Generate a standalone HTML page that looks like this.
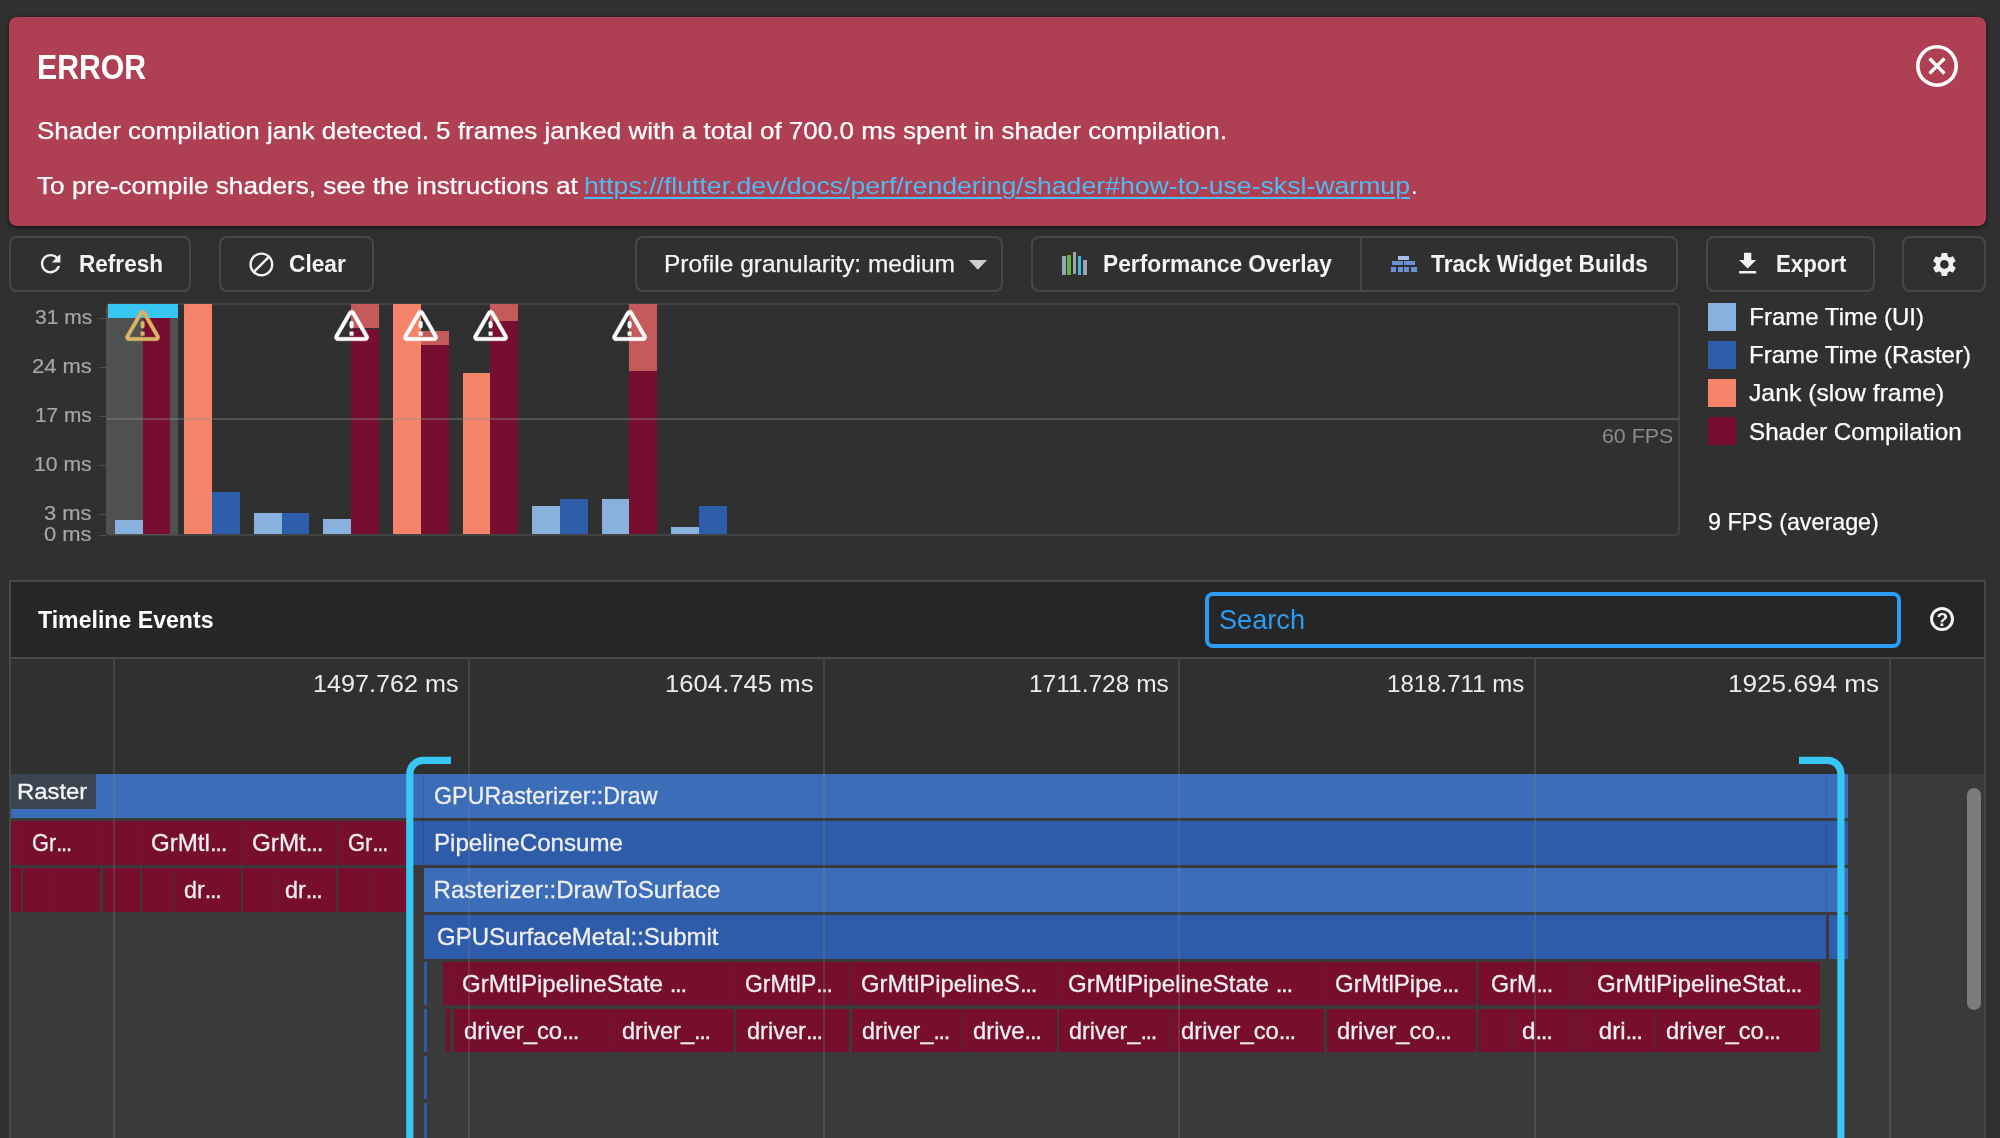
<!DOCTYPE html>
<html><head><meta charset="utf-8"><title>Flutter DevTools - Performance</title>
<style>
html,body{margin:0;padding:0;}
body{width:2000px;height:1138px;overflow:hidden;background:#303030;font-family:"Liberation Sans",sans-serif;position:relative;}
#root{position:absolute;left:0;top:0;width:2000px;height:1138px;overflow:hidden;will-change:transform;}
#root div{box-sizing:border-box;}
svg{position:absolute;overflow:visible;}
</style></head><body><div id="root">
<div style="position:absolute;left:9px;top:17.4px;width:1977px;height:208.6px;background:#af4054;border-radius:8px;box-shadow:0 1.5px 4px rgba(0,0,0,.55)"></div>
<div style="position:absolute;left:37.00px;top:49.54px;font-size:34.8px;line-height:34.8px;color:#ffffff;font-weight:700;white-space:pre;transform-origin:0 0;transform:scaleX(0.8673);">ERROR</div>
<div style="position:absolute;left:36.50px;top:118.76px;font-size:24.5px;line-height:24.5px;color:#ffffff;font-weight:400;white-space:pre;transform-origin:0 0;transform:scaleX(1.0617);-webkit-text-stroke:0.25px #ffffff;">Shader compilation jank detected. 5 frames janked with a total of 700.0 ms spent in shader compilation.</div>
<div style="position:absolute;left:36.50px;top:174.26px;font-size:24.5px;line-height:24.5px;color:#ffffff;font-weight:400;white-space:pre;transform-origin:0 0;transform:scaleX(1.0674);-webkit-text-stroke:0.25px #ffffff;">To pre-compile shaders, see the instructions at </div>
<div style="position:absolute;left:584.00px;top:174.26px;font-size:24.5px;line-height:24.5px;color:#4cbcf3;font-weight:400;white-space:pre;transform-origin:0 0;transform:scaleX(1.0870);text-decoration:underline;text-underline-offset:3px;text-decoration-thickness:1.5px;">https://flutter.dev/docs/perf/rendering/shader#how-to-use-sksl-warmup</div>
<div style="position:absolute;left:1411.00px;top:174.26px;font-size:24.5px;line-height:24.5px;color:#ffffff;font-weight:400;white-space:pre;transform-origin:0 0;">.</div>
<svg style="left:1913.4px;top:42.4px" width="48" height="48" viewBox="0 0 48 48"><circle cx="24" cy="24" r="19.2" fill="none" stroke="#fff" stroke-width="3.6"/><path d="M16.5 16.5L31.5 31.5M31.5 16.5L16.5 31.5" stroke="#fff" stroke-width="3.2" fill="none"/></svg>
<div style="position:absolute;left:8.5px;top:235.7px;width:182.8px;height:56px;border:2px solid #484848;border-radius:8px;"></div>
<svg style="left:36.06px;top:249.46px" width="29.28" height="29.28" viewBox="0 0 24 24"><path d="M17.65 6.35C16.2 4.9 14.21 4 12 4c-4.42 0-7.99 3.58-7.99 8s3.57 8 7.99 8c3.73 0 6.84-2.55 7.73-6h-2.08c-.82 2.33-3.04 4-5.65 4-3.31 0-6-2.69-6-6s2.69-6 6-6c1.66 0 3.14.69 4.22 1.78L13 11h7V4l-2.35 2.35z" fill="#f1f1f1"/></svg>
<div style="position:absolute;left:78.50px;top:252.18px;font-size:24px;line-height:24px;color:#f4f4f4;font-weight:700;white-space:pre;transform-origin:0 0;transform:scaleX(0.9399);">Refresh</div>
<div style="position:absolute;left:218.5px;top:235.7px;width:155.3px;height:56px;border:2px solid #484848;border-radius:8px;"></div>
<svg style="left:246.50px;top:249.60px" width="28.80" height="28.80" viewBox="0 0 24 24"><path d="M12 2C6.48 2 2 6.48 2 12s4.48 10 10 10 10-4.48 10-10S17.52 2 12 2zM4 12c0-4.42 3.58-8 8-8 1.85 0 3.55.63 4.9 1.69L5.69 16.9C4.63 15.55 4 13.85 4 12zm8 8c-1.85 0-3.55-.63-4.9-1.69L18.31 7.1C19.37 8.45 20 10.15 20 12c0 4.42-3.58 8-8 8z" fill="#f1f1f1"/></svg>
<div style="position:absolute;left:288.50px;top:252.18px;font-size:24px;line-height:24px;color:#f4f4f4;font-weight:700;white-space:pre;transform-origin:0 0;transform:scaleX(0.9459);">Clear</div>
<div style="position:absolute;left:634.5px;top:235.7px;width:368.20000000000005px;height:56px;border:2px solid #484848;border-radius:8px;"></div>
<div style="position:absolute;left:664.30px;top:252.18px;font-size:24px;line-height:24px;color:#f4f4f4;font-weight:400;white-space:pre;transform-origin:0 0;transform:scaleX(1.0194);-webkit-text-stroke:0.25px #f4f4f4;">Profile granularity: medium</div>
<svg style="left:0;top:0" width="2000" height="400"><polygon points="968.8,260 987,260 977.9,269.8" fill="#cfcfcf"/></svg>
<div style="position:absolute;left:1030.8px;top:235.7px;width:647.4000000000001px;height:56px;border:2px solid #484848;border-radius:8px;"></div>
<div style="position:absolute;left:1359.50px;top:237.50px;width:2.00px;height:52.50px;background:#484848;"></div>
<div style="position:absolute;left:1062.00px;top:255.50px;width:3.50px;height:19.00px;background:#9aa7b0;"></div>
<div style="position:absolute;left:1067.30px;top:255.00px;width:3.50px;height:19.50px;background:#62b543;"></div>
<div style="position:absolute;left:1072.60px;top:251.80px;width:3.50px;height:22.70px;background:#9aa7b0;"></div>
<div style="position:absolute;left:1077.90px;top:255.50px;width:3.50px;height:19.00px;background:#40b6e0;"></div>
<div style="position:absolute;left:1083.20px;top:260.00px;width:3.50px;height:14.50px;background:#9aa7b0;"></div>
<div style="position:absolute;left:1103.00px;top:252.18px;font-size:24px;line-height:24px;color:#f4f4f4;font-weight:700;white-space:pre;transform-origin:0 0;transform:scaleX(0.9475);">Performance Overlay</div>
<div style="position:absolute;left:1397.80px;top:255.50px;width:11.40px;height:4.50px;background:#a9c1ea;"></div>
<div style="position:absolute;left:1391.50px;top:261.20px;width:11.00px;height:4.30px;background:#6a8fd3;"></div>
<div style="position:absolute;left:1403.80px;top:261.20px;width:11.70px;height:4.30px;background:#6a8fd3;"></div>
<div style="position:absolute;left:1390.60px;top:267.20px;width:5.80px;height:4.80px;background:#6a8fd3;"></div>
<div style="position:absolute;left:1397.60px;top:267.20px;width:5.00px;height:4.80px;background:#6a8fd3;"></div>
<div style="position:absolute;left:1403.70px;top:267.20px;width:5.00px;height:4.80px;background:#6a8fd3;"></div>
<div style="position:absolute;left:1410.80px;top:267.20px;width:5.80px;height:4.80px;background:#6a8fd3;"></div>
<div style="position:absolute;left:1430.50px;top:252.18px;font-size:24px;line-height:24px;color:#f4f4f4;font-weight:700;white-space:pre;transform-origin:0 0;transform:scaleX(0.9469);">Track Widget Builds</div>
<div style="position:absolute;left:1705.6px;top:235.7px;width:169.20000000000005px;height:56px;border:2px solid #484848;border-radius:8px;"></div>
<svg style="left:1733.11px;top:248.92px" width="29.28" height="29.28" viewBox="0 0 24 24"><path d="M19 9h-4V3H9v6H5l7 7 7-7zM5 18v2h14v-2H5z" fill="#f1f1f1"/></svg>
<div style="position:absolute;left:1775.50px;top:252.18px;font-size:24px;line-height:24px;color:#f4f4f4;font-weight:700;white-space:pre;transform-origin:0 0;transform:scaleX(0.9248);">Export</div>
<div style="position:absolute;left:1902.3px;top:235.7px;width:83.70000000000005px;height:56px;border:2px solid #484848;border-radius:8px;"></div>
<svg style="left:1929.70px;top:249.60px" width="28.80" height="28.80" viewBox="0 0 24 24"><path d="M19.14 12.94c.04-.3.06-.61.06-.94 0-.32-.02-.64-.07-.94l2.03-1.58c.18-.14.23-.41.12-.61l-1.92-3.32c-.12-.22-.37-.29-.59-.22l-2.39.96c-.5-.38-1.03-.7-1.62-.94l-.36-2.54c-.04-.24-.24-.41-.48-.41h-3.84c-.24 0-.43.17-.47.41l-.36 2.54c-.59.24-1.13.57-1.62.94l-2.39-.96c-.22-.08-.47 0-.59.22L2.74 8.87c-.12.21-.08.47.12.61l2.03 1.58c-.05.3-.09.63-.09.94s.02.64.07.94l-2.03 1.58c-.18.14-.23.41-.12.61l1.92 3.32c.12.22.37.29.59.22l2.39-.96c.5.38 1.03.7 1.62.94l.36 2.54c.05.24.24.41.48.41h3.84c.24 0 .44-.17.47-.41l.36-2.54c.59-.24 1.13-.56 1.62-.94l2.39.96c.22.08.47 0 .59-.22l1.92-3.32c.12-.22.07-.47-.12-.61l-2.01-1.58zM12 15.6c-1.98 0-3.6-1.62-3.6-3.6s1.62-3.6 3.6-3.6 3.6 1.62 3.6 3.6-1.62 3.6-3.6 3.6z" fill="#f1f1f1"/></svg>
<div style="position:absolute;left:106px;top:302.6px;width:1574.3px;height:233px;border:2px solid #434343;border-radius:5px"></div>
<div style="position:absolute;left:106.2px;top:304.1px;width:71.8px;height:230.89999999999998px;background:#4f5050;border-radius:4px 0 0 4px"></div>
<div style="position:absolute;left:114.75px;top:519.70px;width:27.80px;height:14.30px;background:#88b1de;"></div>
<div style="position:absolute;left:142.55px;top:304.10px;width:27.80px;height:229.90px;background:#780e2f;"></div>
<div style="position:absolute;left:184.30px;top:304.10px;width:27.80px;height:229.90px;background:#f5846b;"></div>
<div style="position:absolute;left:212.10px;top:491.80px;width:27.80px;height:42.20px;background:#2d5dab;"></div>
<div style="position:absolute;left:253.85px;top:512.90px;width:27.80px;height:21.10px;background:#88b1de;"></div>
<div style="position:absolute;left:281.65px;top:512.90px;width:27.80px;height:21.10px;background:#2d5dab;"></div>
<div style="position:absolute;left:323.40px;top:519.30px;width:27.80px;height:14.70px;background:#88b1de;"></div>
<div style="position:absolute;left:351.20px;top:304.10px;width:27.80px;height:24.40px;background:#c45a5a;"></div>
<div style="position:absolute;left:351.20px;top:328.50px;width:27.80px;height:205.50px;background:#780e2f;"></div>
<div style="position:absolute;left:392.95px;top:304.10px;width:27.80px;height:229.90px;background:#f5846b;"></div>
<div style="position:absolute;left:420.75px;top:331.00px;width:27.80px;height:14.00px;background:#c45a5a;"></div>
<div style="position:absolute;left:420.75px;top:345.00px;width:27.80px;height:189.00px;background:#780e2f;"></div>
<div style="position:absolute;left:462.50px;top:373.00px;width:27.80px;height:161.00px;background:#f5846b;"></div>
<div style="position:absolute;left:490.30px;top:304.10px;width:27.80px;height:16.60px;background:#c45a5a;"></div>
<div style="position:absolute;left:490.30px;top:320.70px;width:27.80px;height:213.30px;background:#780e2f;"></div>
<div style="position:absolute;left:532.05px;top:505.50px;width:27.80px;height:28.50px;background:#88b1de;"></div>
<div style="position:absolute;left:559.85px;top:498.70px;width:27.80px;height:35.30px;background:#2d5dab;"></div>
<div style="position:absolute;left:601.60px;top:498.70px;width:27.80px;height:35.30px;background:#88b1de;"></div>
<div style="position:absolute;left:629.40px;top:304.10px;width:27.80px;height:66.90px;background:#c45a5a;"></div>
<div style="position:absolute;left:629.40px;top:371.00px;width:27.80px;height:163.00px;background:#780e2f;"></div>
<div style="position:absolute;left:671.15px;top:526.50px;width:27.80px;height:7.50px;background:#88b1de;"></div>
<div style="position:absolute;left:698.95px;top:505.50px;width:27.80px;height:28.50px;background:#2d5dab;"></div>
<div style="position:absolute;left:107.60px;top:303.80px;width:70.40px;height:14.30px;background:#38c6f4;"></div>
<div style="position:absolute;left:107.00px;top:418.20px;width:1572.00px;height:1.60px;background:rgba(140,140,140,.38);"></div>
<div style="position:absolute;left:99.20px;top:317.50px;width:8.00px;height:1.10px;background:#505050;"></div>
<div style="position:absolute;left:34.70px;top:306.87px;font-size:20px;line-height:20px;color:#a6a6a6;font-weight:400;white-space:pre;transform-origin:0 0;transform:scaleX(1.0501);-webkit-text-stroke:0.2px #a6a6a6;">31 ms</div>
<div style="position:absolute;left:99.20px;top:366.80px;width:8.00px;height:1.10px;background:#505050;"></div>
<div style="position:absolute;left:32.10px;top:356.17px;font-size:20px;line-height:20px;color:#a6a6a6;font-weight:400;white-space:pre;transform-origin:0 0;transform:scaleX(1.0979);-webkit-text-stroke:0.2px #a6a6a6;">24 ms</div>
<div style="position:absolute;left:99.20px;top:416.10px;width:8.00px;height:1.10px;background:#505050;"></div>
<div style="position:absolute;left:35.30px;top:405.47px;font-size:20px;line-height:20px;color:#a6a6a6;font-weight:400;white-space:pre;transform-origin:0 0;transform:scaleX(1.0391);-webkit-text-stroke:0.2px #a6a6a6;">17 ms</div>
<div style="position:absolute;left:99.20px;top:464.90px;width:8.00px;height:1.10px;background:#505050;"></div>
<div style="position:absolute;left:34.20px;top:454.27px;font-size:20px;line-height:20px;color:#a6a6a6;font-weight:400;white-space:pre;transform-origin:0 0;transform:scaleX(1.0593);-webkit-text-stroke:0.2px #a6a6a6;">10 ms</div>
<div style="position:absolute;left:99.20px;top:513.60px;width:8.00px;height:1.10px;background:#505050;"></div>
<div style="position:absolute;left:44.40px;top:502.97px;font-size:20px;line-height:20px;color:#a6a6a6;font-weight:400;white-space:pre;transform-origin:0 0;transform:scaleX(1.0959);-webkit-text-stroke:0.2px #a6a6a6;">3 ms</div>
<div style="position:absolute;left:99.20px;top:534.70px;width:8.00px;height:1.10px;background:#505050;"></div>
<div style="position:absolute;left:44.40px;top:524.07px;font-size:20px;line-height:20px;color:#a6a6a6;font-weight:400;white-space:pre;transform-origin:0 0;transform:scaleX(1.0959);-webkit-text-stroke:0.2px #a6a6a6;">0 ms</div>
<div style="position:absolute;left:1602.10px;top:425.42px;font-size:21px;line-height:21px;color:#8c8c8c;font-weight:400;white-space:pre;transform-origin:0 0;transform:scaleX(1.0165);">60 FPS</div>
<svg style="left:120.90px;top:303.15px" width="43.2" height="43.2" viewBox="0 0 24 24"><path d="M12 5.99L19.53 19H4.47L12 5.99M2.74 18c-.77 1.33.19 3 1.73 3h15.06c1.54 0 2.5-1.67 1.73-3L13.73 4.99c-.77-1.33-2.69-1.33-3.46 0L2.74 18zM11 11v2c0 .55.45 1 1 1s1-.45 1-1v-2c0-.55-.45-1-1-1s-1 .45-1 1zm0 5h2v2h-2z" fill="#dab466" fill-rule="evenodd" stroke="#dab466" stroke-width=".22"/></svg>
<svg style="left:329.60px;top:303.15px" width="43.2" height="43.2" viewBox="0 0 24 24"><path d="M12 5.99L19.53 19H4.47L12 5.99M2.74 18c-.77 1.33.19 3 1.73 3h15.06c1.54 0 2.5-1.67 1.73-3L13.73 4.99c-.77-1.33-2.69-1.33-3.46 0L2.74 18zM11 11v2c0 .55.45 1 1 1s1-.45 1-1v-2c0-.55-.45-1-1-1s-1 .45-1 1zm0 5h2v2h-2z" fill="#ffffff" fill-rule="evenodd" stroke="#ffffff" stroke-width=".22"/></svg>
<svg style="left:399.15px;top:303.15px" width="43.2" height="43.2" viewBox="0 0 24 24"><path d="M12 5.99L19.53 19H4.47L12 5.99M2.74 18c-.77 1.33.19 3 1.73 3h15.06c1.54 0 2.5-1.67 1.73-3L13.73 4.99c-.77-1.33-2.69-1.33-3.46 0L2.74 18zM11 11v2c0 .55.45 1 1 1s1-.45 1-1v-2c0-.55-.45-1-1-1s-1 .45-1 1zm0 5h2v2h-2z" fill="#ffffff" fill-rule="evenodd" stroke="#ffffff" stroke-width=".22"/></svg>
<svg style="left:468.70px;top:303.15px" width="43.2" height="43.2" viewBox="0 0 24 24"><path d="M12 5.99L19.53 19H4.47L12 5.99M2.74 18c-.77 1.33.19 3 1.73 3h15.06c1.54 0 2.5-1.67 1.73-3L13.73 4.99c-.77-1.33-2.69-1.33-3.46 0L2.74 18zM11 11v2c0 .55.45 1 1 1s1-.45 1-1v-2c0-.55-.45-1-1-1s-1 .45-1 1zm0 5h2v2h-2z" fill="#ffffff" fill-rule="evenodd" stroke="#ffffff" stroke-width=".22"/></svg>
<svg style="left:607.80px;top:303.15px" width="43.2" height="43.2" viewBox="0 0 24 24"><path d="M12 5.99L19.53 19H4.47L12 5.99M2.74 18c-.77 1.33.19 3 1.73 3h15.06c1.54 0 2.5-1.67 1.73-3L13.73 4.99c-.77-1.33-2.69-1.33-3.46 0L2.74 18zM11 11v2c0 .55.45 1 1 1s1-.45 1-1v-2c0-.55-.45-1-1-1s-1 .45-1 1zm0 5h2v2h-2z" fill="#ffffff" fill-rule="evenodd" stroke="#ffffff" stroke-width=".22"/></svg>
<div style="position:absolute;left:1708.00px;top:302.50px;width:28.00px;height:28.00px;background:#88b1de;"></div>
<div style="position:absolute;left:1749.30px;top:304.98px;font-size:24px;line-height:24px;color:#ffffff;font-weight:400;white-space:pre;transform-origin:0 0;-webkit-text-stroke:0.25px #ffffff;">Frame Time (UI)</div>
<div style="position:absolute;left:1708.00px;top:340.70px;width:28.00px;height:28.00px;background:#2d5dab;"></div>
<div style="position:absolute;left:1749.30px;top:343.18px;font-size:24px;line-height:24px;color:#ffffff;font-weight:400;white-space:pre;transform-origin:0 0;transform:scaleX(1.0030);-webkit-text-stroke:0.25px #ffffff;">Frame Time (Raster)</div>
<div style="position:absolute;left:1708.00px;top:378.90px;width:28.00px;height:28.00px;background:#f5846b;"></div>
<div style="position:absolute;left:1749.30px;top:381.38px;font-size:24px;line-height:24px;color:#ffffff;font-weight:400;white-space:pre;transform-origin:0 0;transform:scaleX(1.0310);-webkit-text-stroke:0.25px #ffffff;">Jank (slow frame)</div>
<div style="position:absolute;left:1708.00px;top:417.10px;width:28.00px;height:28.00px;background:#780e2f;"></div>
<div style="position:absolute;left:1749.30px;top:419.58px;font-size:24px;line-height:24px;color:#ffffff;font-weight:400;white-space:pre;transform-origin:0 0;transform:scaleX(1.0090);-webkit-text-stroke:0.25px #ffffff;">Shader Compilation</div>
<div style="position:absolute;left:1707.50px;top:509.68px;font-size:24px;line-height:24px;color:#ffffff;font-weight:400;white-space:pre;transform-origin:0 0;transform:scaleX(0.9700);-webkit-text-stroke:0.25px #ffffff;">9 FPS (average)</div>
<div style="position:absolute;left:8.90px;top:580.30px;width:1977.10px;height:619.70px;background:#484848;"></div>
<div style="position:absolute;left:10.90px;top:582.40px;width:1973.30px;height:74.50px;background:#262626;"></div>
<div style="position:absolute;left:10.90px;top:658.90px;width:1973.30px;height:115.40px;background:#303030;"></div>
<div style="position:absolute;left:10.90px;top:774.30px;width:1973.30px;height:425.70px;background:#3a3a3a;"></div>
<div style="position:absolute;left:37.70px;top:608.26px;font-size:24.5px;line-height:24.5px;color:#ffffff;font-weight:700;white-space:pre;transform-origin:0 0;transform:scaleX(0.9430);">Timeline Events</div>
<div style="position:absolute;left:1205px;top:591.9px;width:696px;height:56.2px;border:4px solid #2b9cf3;border-radius:8px"></div>
<div style="position:absolute;left:1219.00px;top:605.50px;font-size:28px;line-height:28px;color:#2b9cf3;font-weight:400;white-space:pre;transform-origin:0 0;transform:scaleX(0.9694);">Search</div>
<svg style="left:1929.9px;top:607px" width="24" height="24" viewBox="0 0 24 24"><circle cx="12" cy="12" r="10.5" fill="none" stroke="#f4f4f4" stroke-width="2.9"/></svg>
<div style="position:absolute;left:1936.50px;top:609.82px;font-size:19px;line-height:19px;color:#f4f4f4;font-weight:700;white-space:pre;transform-origin:0 0;">?</div>
<div style="position:absolute;left:10.80px;top:774.30px;width:1836.80px;height:43.40px;background:#3c6db9;"></div>
<div style="position:absolute;left:10.80px;top:774.30px;width:84.80px;height:34.50px;background:#3a4452;"></div>
<div style="position:absolute;left:17.40px;top:781.38px;font-size:22px;line-height:22px;color:#f6f6f6;font-weight:400;white-space:pre;transform-origin:0 0;transform:scaleX(1.0849);-webkit-text-stroke:0.3px #f6f6f6;">Raster</div>
<div style="position:absolute;left:10.80px;top:821.25px;width:395.00px;height:43.40px;background:#780e2e;"></div>
<div style="position:absolute;left:20.85px;top:821.25px;width:1.30px;height:43.40px;background:rgba(58,58,58,.34);"></div>
<div style="position:absolute;left:100.65px;top:821.25px;width:1.30px;height:43.40px;background:rgba(58,58,58,.34);"></div>
<div style="position:absolute;left:139.85px;top:821.25px;width:1.30px;height:43.40px;background:rgba(58,58,58,.34);"></div>
<div style="position:absolute;left:240.15px;top:821.25px;width:1.30px;height:43.40px;background:rgba(58,58,58,.34);"></div>
<div style="position:absolute;left:337.45px;top:821.25px;width:1.30px;height:43.40px;background:rgba(58,58,58,.34);"></div>
<div style="position:absolute;left:10.80px;top:868.20px;width:395.00px;height:43.40px;background:#780e2e;"></div>
<div style="position:absolute;left:20.90px;top:867.70px;width:2.60px;height:44.40px;background:#3a3a3a;"></div>
<div style="position:absolute;left:100.20px;top:867.70px;width:2.60px;height:44.40px;background:#3a3a3a;"></div>
<div style="position:absolute;left:139.50px;top:867.70px;width:2.60px;height:44.40px;background:#3a3a3a;"></div>
<div style="position:absolute;left:240.60px;top:867.70px;width:2.60px;height:44.40px;background:#3a3a3a;"></div>
<div style="position:absolute;left:52.65px;top:868.20px;width:1.30px;height:43.40px;background:rgba(58,58,58,.34);"></div>
<div style="position:absolute;left:173.35px;top:868.20px;width:1.30px;height:43.40px;background:rgba(58,58,58,.34);"></div>
<div style="position:absolute;left:274.15px;top:868.20px;width:1.30px;height:43.40px;background:rgba(58,58,58,.34);"></div>
<div style="position:absolute;left:368.95px;top:868.20px;width:1.30px;height:43.40px;background:rgba(58,58,58,.34);"></div>
<div style="position:absolute;left:335.90px;top:867.70px;width:2.60px;height:44.40px;background:#3a3a3a;"></div>
<div style="position:absolute;left:32.10px;top:831.23px;font-size:24px;line-height:24px;color:#efefef;font-weight:400;white-space:pre;transform-origin:0 0;transform:scaleX(0.9069);-webkit-text-stroke:0.3px #efefef;">Gr<span style="letter-spacing:-1.3px">...</span></div>
<div style="position:absolute;left:151.20px;top:831.23px;font-size:24px;line-height:24px;color:#efefef;font-weight:400;white-space:pre;transform-origin:0 0;transform:scaleX(1.0045);-webkit-text-stroke:0.3px #efefef;">GrMtl<span style="letter-spacing:-1.3px">...</span></div>
<div style="position:absolute;left:251.80px;top:831.23px;font-size:24px;line-height:24px;color:#efefef;font-weight:400;white-space:pre;transform-origin:0 0;transform:scaleX(1.0095);-webkit-text-stroke:0.3px #efefef;">GrMt<span style="letter-spacing:-1.3px">...</span></div>
<div style="position:absolute;left:348.40px;top:831.23px;font-size:24px;line-height:24px;color:#efefef;font-weight:400;white-space:pre;transform-origin:0 0;transform:scaleX(0.9163);-webkit-text-stroke:0.3px #efefef;">Gr<span style="letter-spacing:-1.3px">...</span></div>
<div style="position:absolute;left:183.60px;top:878.18px;font-size:24px;line-height:24px;color:#efefef;font-weight:400;white-space:pre;transform-origin:0 0;transform:scaleX(0.9719);-webkit-text-stroke:0.3px #efefef;">dr<span style="letter-spacing:-1.3px">...</span></div>
<div style="position:absolute;left:284.70px;top:878.18px;font-size:24px;line-height:24px;color:#efefef;font-weight:400;white-space:pre;transform-origin:0 0;transform:scaleX(0.9746);-webkit-text-stroke:0.3px #efefef;">dr<span style="letter-spacing:-1.3px">...</span></div>
<div style="position:absolute;left:413.00px;top:821.25px;width:1434.60px;height:43.40px;background:#2e5caa;"></div>
<div style="position:absolute;left:423.70px;top:868.20px;width:1423.90px;height:43.40px;background:#3c6db9;"></div>
<div style="position:absolute;left:423.70px;top:915.15px;width:1402.50px;height:43.40px;background:#2e5caa;"></div>
<div style="position:absolute;left:1828.70px;top:915.15px;width:18.90px;height:43.40px;background:#2e5caa;"></div>
<div style="position:absolute;left:422.60px;top:774.30px;width:1.00px;height:43.40px;background:rgba(0,0,0,.12);"></div>
<div style="position:absolute;left:422.60px;top:821.25px;width:1.00px;height:43.40px;background:rgba(0,0,0,.12);"></div>
<div style="position:absolute;left:1826.20px;top:774.30px;width:1.20px;height:43.40px;background:rgba(0,0,0,.1);"></div>
<div style="position:absolute;left:1826.20px;top:821.25px;width:1.20px;height:43.40px;background:rgba(0,0,0,.1);"></div>
<div style="position:absolute;left:1826.20px;top:868.20px;width:1.20px;height:43.40px;background:rgba(0,0,0,.1);"></div>
<div style="position:absolute;left:424.40px;top:962.10px;width:2.80px;height:43.40px;background:#2e5caa;"></div>
<div style="position:absolute;left:424.40px;top:1009.05px;width:2.80px;height:43.40px;background:#2e5caa;"></div>
<div style="position:absolute;left:424.40px;top:1056.00px;width:2.80px;height:43.40px;background:#2e5caa;"></div>
<div style="position:absolute;left:424.40px;top:1102.95px;width:2.80px;height:43.40px;background:#2e5caa;"></div>
<div style="position:absolute;left:424.40px;top:1149.90px;width:2.80px;height:43.40px;background:#2e5caa;"></div>
<div style="position:absolute;left:433.60px;top:784.28px;font-size:24px;line-height:24px;color:#efefef;font-weight:400;white-space:pre;transform-origin:0 0;transform:scaleX(0.9691);-webkit-text-stroke:0.3px #efefef;">GPURasterizer::Draw</div>
<div style="position:absolute;left:433.60px;top:831.23px;font-size:24px;line-height:24px;color:#efefef;font-weight:400;white-space:pre;transform-origin:0 0;transform:scaleX(1.0042);-webkit-text-stroke:0.3px #efefef;">PipelineConsume</div>
<div style="position:absolute;left:433.60px;top:878.18px;font-size:24px;line-height:24px;color:#efefef;font-weight:400;white-space:pre;transform-origin:0 0;-webkit-text-stroke:0.3px #efefef;">Rasterizer::DrawToSurface</div>
<div style="position:absolute;left:437.10px;top:925.13px;font-size:24px;line-height:24px;color:#efefef;font-weight:400;white-space:pre;transform-origin:0 0;-webkit-text-stroke:0.3px #efefef;">GPUSurfaceMetal::Submit</div>
<div style="position:absolute;left:442.90px;top:962.10px;width:1377.10px;height:43.40px;background:#780e2e;"></div>
<div style="position:absolute;left:450.15px;top:962.10px;width:1.30px;height:43.40px;background:rgba(58,58,58,.34);"></div>
<div style="position:absolute;left:733.55px;top:962.10px;width:1.30px;height:43.40px;background:rgba(58,58,58,.34);"></div>
<div style="position:absolute;left:849.35px;top:962.10px;width:1.30px;height:43.40px;background:rgba(58,58,58,.34);"></div>
<div style="position:absolute;left:1056.85px;top:962.10px;width:1.30px;height:43.40px;background:rgba(58,58,58,.34);"></div>
<div style="position:absolute;left:1323.85px;top:962.10px;width:1.30px;height:43.40px;background:rgba(58,58,58,.34);"></div>
<div style="position:absolute;left:1571.85px;top:962.10px;width:1.30px;height:43.40px;background:rgba(58,58,58,.34);"></div>
<div style="position:absolute;left:1575.05px;top:962.10px;width:1.30px;height:43.40px;background:rgba(58,58,58,.34);"></div>
<div style="position:absolute;left:1578.05px;top:962.10px;width:1.30px;height:43.40px;background:rgba(58,58,58,.34);"></div>
<div style="position:absolute;left:1581.05px;top:962.10px;width:1.30px;height:43.40px;background:rgba(58,58,58,.34);"></div>
<div style="position:absolute;left:1586.15px;top:962.10px;width:1.30px;height:43.40px;background:rgba(58,58,58,.34);"></div>
<div style="position:absolute;left:1475.60px;top:961.60px;width:2.60px;height:44.40px;background:#3a3a3a;"></div>
<div style="position:absolute;left:1815.65px;top:962.10px;width:1.30px;height:43.40px;background:rgba(58,58,58,.34);"></div>
<div style="position:absolute;left:446.40px;top:1009.05px;width:1373.60px;height:43.40px;background:#780e2e;"></div>
<div style="position:absolute;left:450.30px;top:1008.55px;width:3.70px;height:44.40px;background:#3a3a3a;"></div>
<div style="position:absolute;left:733.50px;top:1008.55px;width:2.60px;height:44.40px;background:#3a3a3a;"></div>
<div style="position:absolute;left:849.20px;top:1008.55px;width:2.60px;height:44.40px;background:#3a3a3a;"></div>
<div style="position:absolute;left:1056.70px;top:1008.55px;width:2.60px;height:44.40px;background:#3a3a3a;"></div>
<div style="position:absolute;left:1324.10px;top:1008.55px;width:2.60px;height:44.40px;background:#3a3a3a;"></div>
<div style="position:absolute;left:1475.60px;top:1008.55px;width:2.60px;height:44.40px;background:#3a3a3a;"></div>
<div style="position:absolute;left:610.15px;top:1009.05px;width:1.30px;height:43.40px;background:rgba(58,58,58,.34);"></div>
<div style="position:absolute;left:961.35px;top:1009.05px;width:1.30px;height:43.40px;background:rgba(58,58,58,.34);"></div>
<div style="position:absolute;left:1169.35px;top:1009.05px;width:1.30px;height:43.40px;background:rgba(58,58,58,.34);"></div>
<div style="position:absolute;left:1480.65px;top:1009.05px;width:1.30px;height:43.40px;background:rgba(58,58,58,.34);"></div>
<div style="position:absolute;left:1511.35px;top:1009.05px;width:1.30px;height:43.40px;background:rgba(58,58,58,.34);"></div>
<div style="position:absolute;left:1571.85px;top:1009.05px;width:1.30px;height:43.40px;background:rgba(58,58,58,.34);"></div>
<div style="position:absolute;left:1575.05px;top:1009.05px;width:1.30px;height:43.40px;background:rgba(58,58,58,.34);"></div>
<div style="position:absolute;left:1578.05px;top:1009.05px;width:1.30px;height:43.40px;background:rgba(58,58,58,.34);"></div>
<div style="position:absolute;left:1581.05px;top:1009.05px;width:1.30px;height:43.40px;background:rgba(58,58,58,.34);"></div>
<div style="position:absolute;left:1586.85px;top:1009.05px;width:1.30px;height:43.40px;background:rgba(58,58,58,.34);"></div>
<div style="position:absolute;left:1654.35px;top:1009.05px;width:1.30px;height:43.40px;background:rgba(58,58,58,.34);"></div>
<div style="position:absolute;left:1815.75px;top:1009.05px;width:1.30px;height:43.40px;background:rgba(58,58,58,.34);"></div>
<div style="position:absolute;left:462.30px;top:972.08px;font-size:24px;line-height:24px;color:#efefef;font-weight:400;white-space:pre;transform-origin:0 0;transform:scaleX(1.0046);-webkit-text-stroke:0.3px #efefef;">GrMtlPipelineState <span style="letter-spacing:-1.3px">...</span></div>
<div style="position:absolute;left:744.90px;top:972.08px;font-size:24px;line-height:24px;color:#efefef;font-weight:400;white-space:pre;transform-origin:0 0;transform:scaleX(0.9534);-webkit-text-stroke:0.3px #efefef;">GrMtlP<span style="letter-spacing:-1.3px">...</span></div>
<div style="position:absolute;left:861.40px;top:972.08px;font-size:24px;line-height:24px;color:#efefef;font-weight:400;white-space:pre;transform-origin:0 0;transform:scaleX(0.9936);-webkit-text-stroke:0.3px #efefef;">GrMtlPipelineS<span style="letter-spacing:-1.3px">...</span></div>
<div style="position:absolute;left:1067.65px;top:972.08px;font-size:24px;line-height:24px;color:#efefef;font-weight:400;white-space:pre;transform-origin:0 0;transform:scaleX(1.0042);-webkit-text-stroke:0.3px #efefef;">GrMtlPipelineState <span style="letter-spacing:-1.3px">...</span></div>
<div style="position:absolute;left:1335.15px;top:972.08px;font-size:24px;line-height:24px;color:#efefef;font-weight:400;white-space:pre;transform-origin:0 0;transform:scaleX(1.0021);-webkit-text-stroke:0.3px #efefef;">GrMtlPipe<span style="letter-spacing:-1.3px">...</span></div>
<div style="position:absolute;left:1491.15px;top:972.08px;font-size:24px;line-height:24px;color:#efefef;font-weight:400;white-space:pre;transform-origin:0 0;transform:scaleX(0.9727);-webkit-text-stroke:0.3px #efefef;">GrM<span style="letter-spacing:-1.3px">...</span></div>
<div style="position:absolute;left:1597.40px;top:972.08px;font-size:24px;line-height:24px;color:#efefef;font-weight:400;white-space:pre;transform-origin:0 0;transform:scaleX(1.0066);-webkit-text-stroke:0.3px #efefef;">GrMtlPipelineStat<span style="letter-spacing:-1.3px">...</span></div>
<div style="position:absolute;left:464.40px;top:1019.03px;font-size:24px;line-height:24px;color:#efefef;font-weight:400;white-space:pre;transform-origin:0 0;transform:scaleX(0.9937);-webkit-text-stroke:0.3px #efefef;">driver_co<span style="letter-spacing:-1.3px">...</span></div>
<div style="position:absolute;left:621.70px;top:1019.03px;font-size:24px;line-height:24px;color:#efefef;font-weight:400;white-space:pre;transform-origin:0 0;transform:scaleX(0.9825);-webkit-text-stroke:0.3px #efefef;">driver_<span style="letter-spacing:-1.3px">...</span></div>
<div style="position:absolute;left:746.70px;top:1019.03px;font-size:24px;line-height:24px;color:#efefef;font-weight:400;white-space:pre;transform-origin:0 0;transform:scaleX(0.9826);-webkit-text-stroke:0.3px #efefef;">driver<span style="letter-spacing:-1.3px">...</span></div>
<div style="position:absolute;left:861.90px;top:1019.03px;font-size:24px;line-height:24px;color:#efefef;font-weight:400;white-space:pre;transform-origin:0 0;transform:scaleX(0.9730);-webkit-text-stroke:0.3px #efefef;">driver_<span style="letter-spacing:-1.3px">...</span></div>
<div style="position:absolute;left:973.15px;top:1019.03px;font-size:24px;line-height:24px;color:#efefef;font-weight:400;white-space:pre;transform-origin:0 0;transform:scaleX(0.9913);-webkit-text-stroke:0.3px #efefef;">drive<span style="letter-spacing:-1.3px">...</span></div>
<div style="position:absolute;left:1069.40px;top:1019.03px;font-size:24px;line-height:24px;color:#efefef;font-weight:400;white-space:pre;transform-origin:0 0;transform:scaleX(0.9730);-webkit-text-stroke:0.3px #efefef;">driver_<span style="letter-spacing:-1.3px">...</span></div>
<div style="position:absolute;left:1180.65px;top:1019.03px;font-size:24px;line-height:24px;color:#efefef;font-weight:400;white-space:pre;transform-origin:0 0;transform:scaleX(0.9910);-webkit-text-stroke:0.3px #efefef;">driver_co<span style="letter-spacing:-1.3px">...</span></div>
<div style="position:absolute;left:1337.40px;top:1019.03px;font-size:24px;line-height:24px;color:#efefef;font-weight:400;white-space:pre;transform-origin:0 0;transform:scaleX(0.9889);-webkit-text-stroke:0.3px #efefef;">driver_co<span style="letter-spacing:-1.3px">...</span></div>
<div style="position:absolute;left:1521.90px;top:1019.03px;font-size:24px;line-height:24px;color:#efefef;font-weight:400;white-space:pre;transform-origin:0 0;transform:scaleX(1.0028);-webkit-text-stroke:0.3px #efefef;">d<span style="letter-spacing:-1.3px">...</span></div>
<div style="position:absolute;left:1598.80px;top:1019.03px;font-size:24px;line-height:24px;color:#efefef;font-weight:400;white-space:pre;transform-origin:0 0;-webkit-text-stroke:0.3px #efefef;">dri<span style="letter-spacing:-1.3px">...</span></div>
<div style="position:absolute;left:1666.20px;top:1019.03px;font-size:24px;line-height:24px;color:#efefef;font-weight:400;white-space:pre;transform-origin:0 0;transform:scaleX(0.9902);-webkit-text-stroke:0.3px #efefef;">driver_co<span style="letter-spacing:-1.3px">...</span></div>
<div style="position:absolute;left:112.75px;top:658.90px;width:2.00px;height:541.10px;background:rgba(125,125,125,.27);"></div>
<div style="position:absolute;left:467.95px;top:658.90px;width:2.00px;height:541.10px;background:rgba(125,125,125,.27);"></div>
<div style="position:absolute;left:823.15px;top:658.90px;width:2.00px;height:541.10px;background:rgba(125,125,125,.27);"></div>
<div style="position:absolute;left:1178.35px;top:658.90px;width:2.00px;height:541.10px;background:rgba(125,125,125,.27);"></div>
<div style="position:absolute;left:1533.55px;top:658.90px;width:2.00px;height:541.10px;background:rgba(125,125,125,.27);"></div>
<div style="position:absolute;left:1888.75px;top:658.90px;width:2.00px;height:541.10px;background:rgba(125,125,125,.27);"></div>
<div style="position:absolute;left:312.65px;top:671.98px;font-size:24px;line-height:24px;color:#ececec;font-weight:400;white-space:pre;transform-origin:0 0;transform:scaleX(1.0500);">1497.762 ms</div>
<div style="position:absolute;left:665.05px;top:671.98px;font-size:24px;line-height:24px;color:#ececec;font-weight:400;white-space:pre;transform-origin:0 0;transform:scaleX(1.0701);">1604.745 ms</div>
<div style="position:absolute;left:1028.95px;top:671.98px;font-size:24px;line-height:24px;color:#ececec;font-weight:400;white-space:pre;transform-origin:0 0;transform:scaleX(1.0206);">1711.728 ms</div>
<div style="position:absolute;left:1386.65px;top:671.98px;font-size:24px;line-height:24px;color:#ececec;font-weight:400;white-space:pre;transform-origin:0 0;transform:scaleX(1.0023);">1818.711 ms</div>
<div style="position:absolute;left:1728.05px;top:671.98px;font-size:24px;line-height:24px;color:#ececec;font-weight:400;white-space:pre;transform-origin:0 0;transform:scaleX(1.0889);">1925.694 ms</div>
<svg style="left:0;top:0" width="2000" height="1138"><path d="M451 760.3H423.3a13.5 13.5 0 0 0 -13.5 13.5V1140" fill="none" stroke="#38c6f4" stroke-width="7.2"/><path d="M1799 760.3H1827.4a13.5 13.5 0 0 1 13.5 13.5V1140" fill="none" stroke="#38c6f4" stroke-width="7.2"/></svg>
<div style="position:absolute;left:1967px;top:788px;width:14px;height:221.5px;background:#7b7b7b;border-radius:7px"></div>
<div style="position:absolute;left:1986.00px;top:560.00px;width:14.00px;height:640.00px;background:#303030;"></div>
</div></body></html>
